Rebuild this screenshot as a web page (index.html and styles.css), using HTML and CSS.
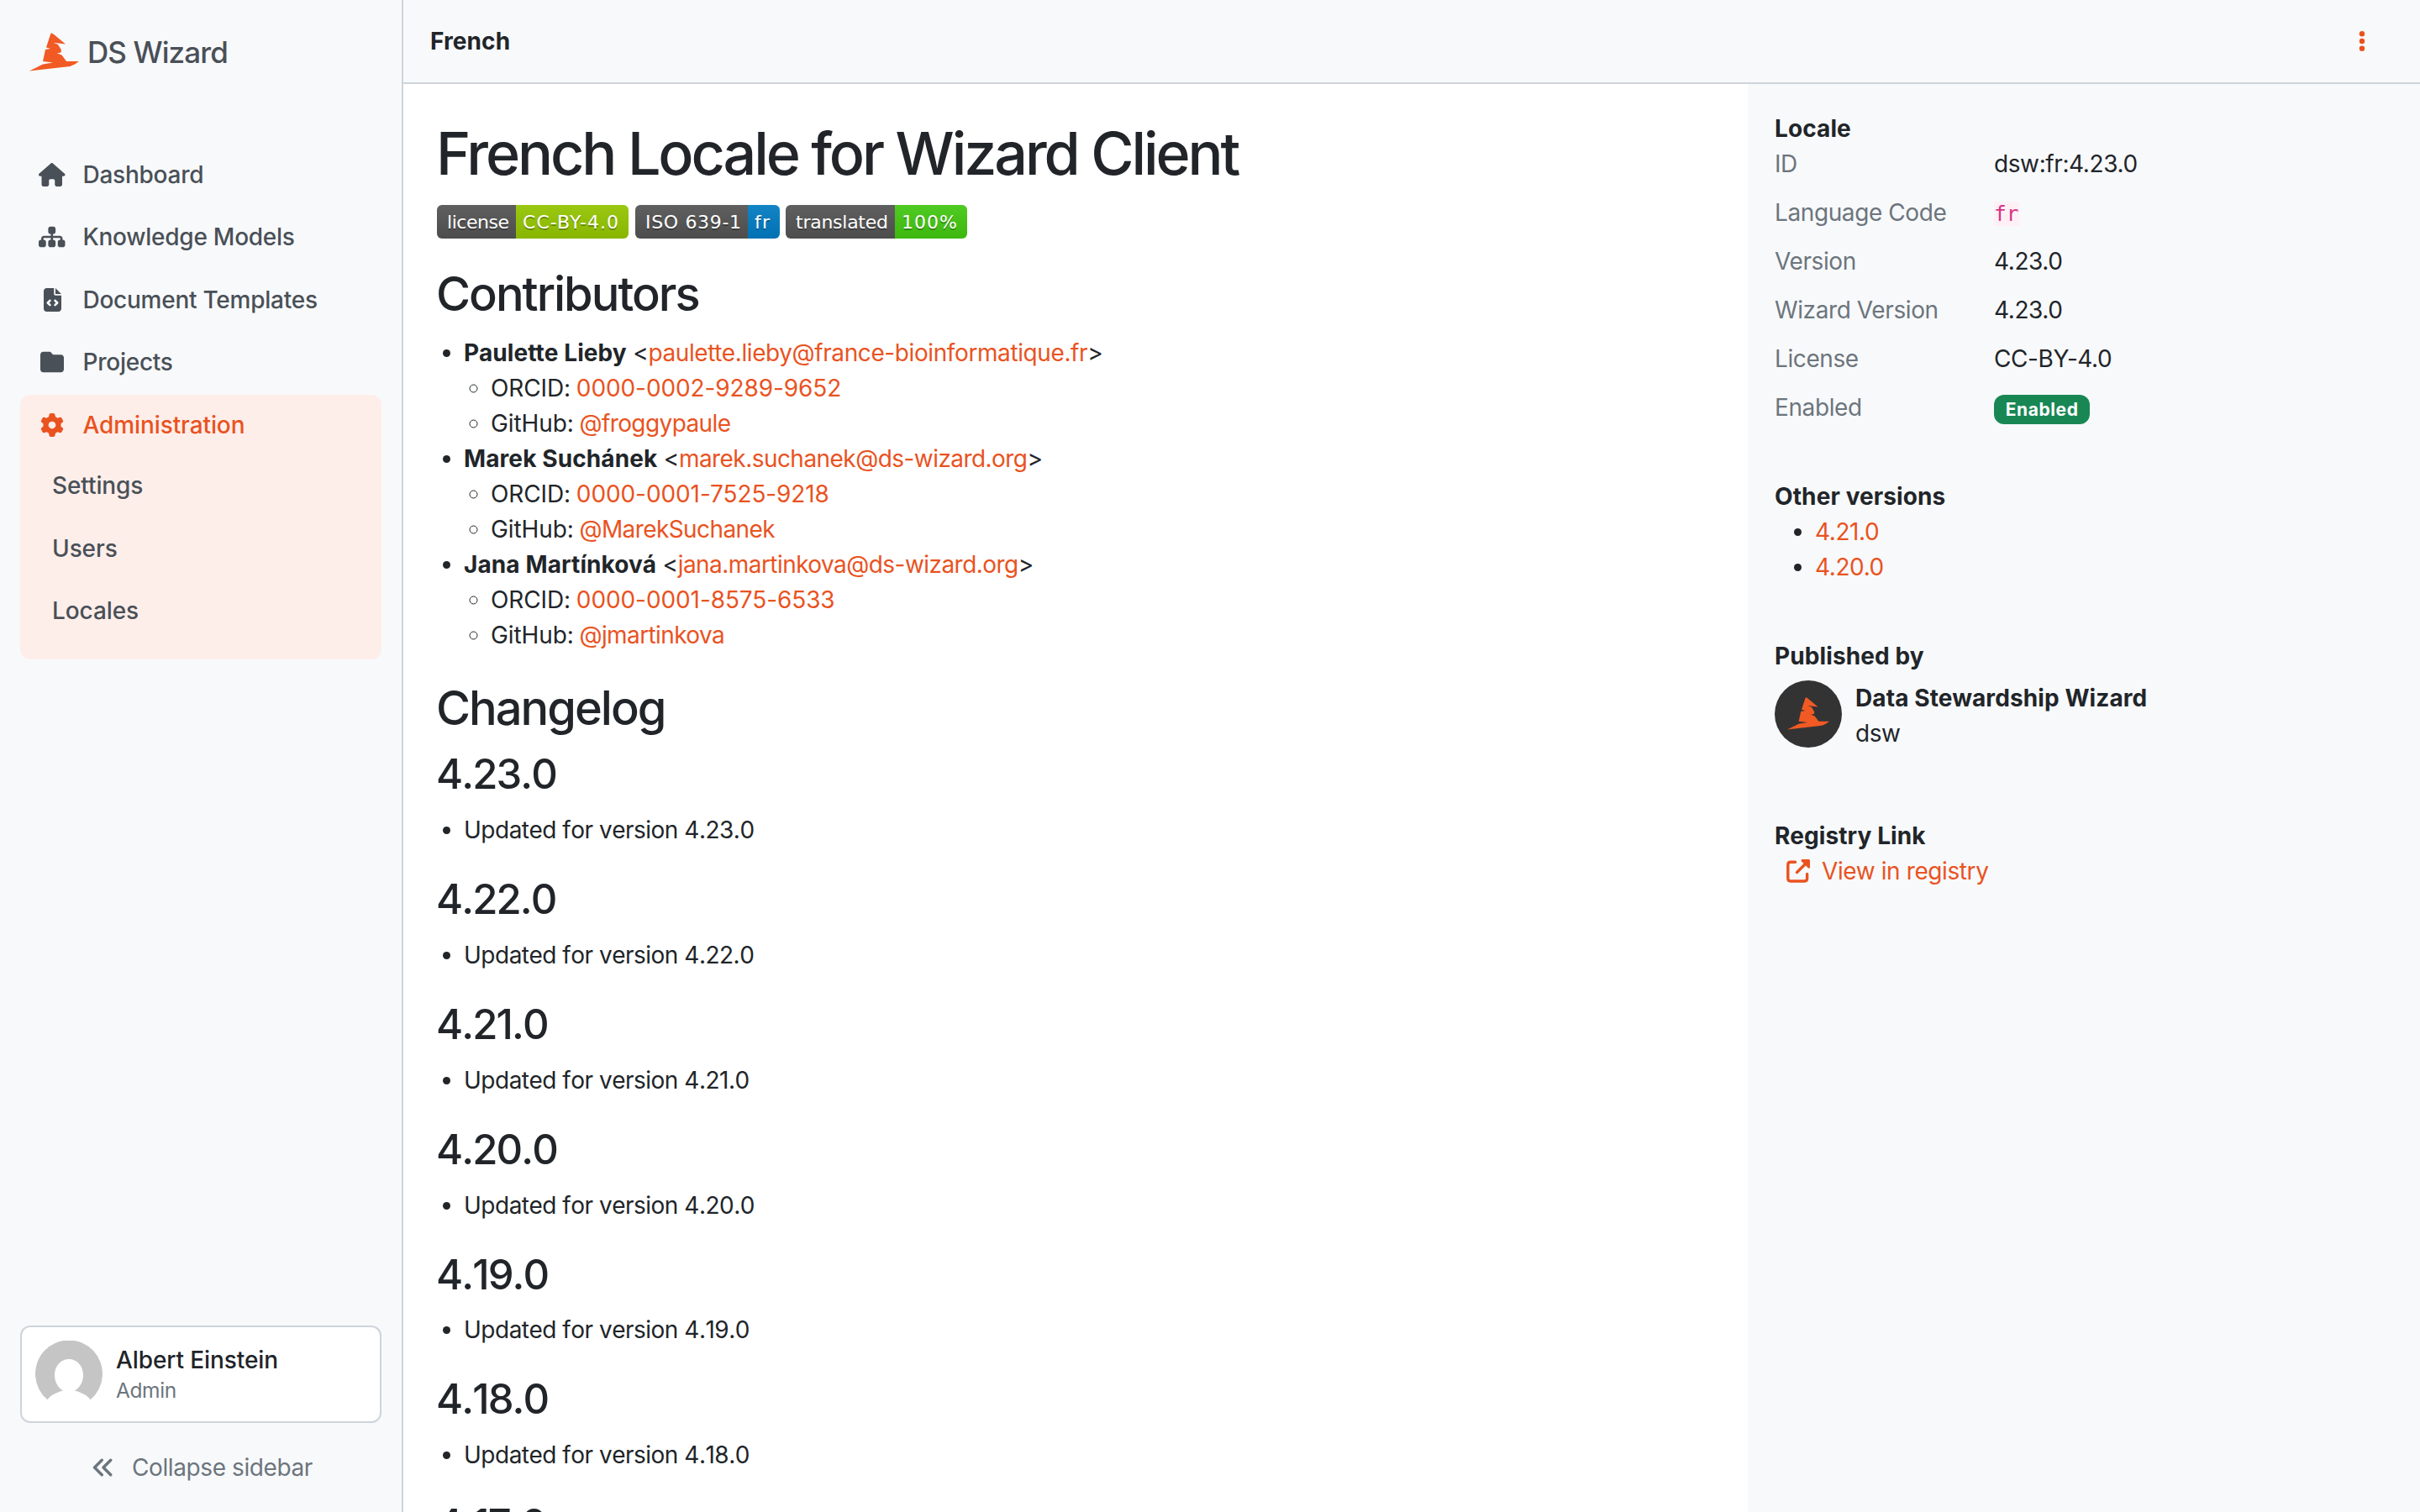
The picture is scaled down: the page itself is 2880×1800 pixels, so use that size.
FILE: index.html
```html
<!DOCTYPE html>
<html lang="en">
<head>
  <meta charset="UTF-8">
  <meta name="viewport" content="width=device-width, initial-scale=1.0">
  <title>French - DS Wizard</title>
  <link rel="stylesheet" href="styles.css">
</head>
<body>

<svg class="symbols" width="0" height="0">
  <symbol id="hat" viewBox="0 0 60 46">
    <path d="M25.500 0.500C26.500 0 28 1.200 29.500 2.300L43 13.500L28.500 11.800L34 14L38 20.500L37.500 23.500L33 24.500L38.500 26.500L44 34H59L54 37.500Q50 40 44 40.500L0 45.500L16 37.500L28 35.500L16 34L19 20L25 19L20 17.500Z"/>
  </symbol>
</svg>

<div class="page">
  <aside class="sidebar">
    <a class="logo" href="#">
      <svg class="logo-hat" viewBox="0 0 60 46"><use href="#hat"/></svg>
      <span>DS Wizard</span>
    </a>

    <nav class="menu">
      <a class="menu-item" href="#">
        <svg class="icon" viewBox="0 0 576 512"><path d="M575.8 255.5c0 18-15 32.1-32 32.1h-32l.7 160.2c0 2.7-.2 5.4-.5 8.100V472c0 22.100-17.900 40-40 40H456c-1.100 0-2.200 0-3.300-.1c-1.400 .1-2.800 .1-4.200 .1H416 392c-22.100 0-40-17.900-40-40V448 384c0-17.700-14.300-32-32-32H256c-17.700 0-32 14.300-32 32v64 24c0 22.100-17.900 40-40 40H160 128.100c-1.500 0-3-.1-4.500-.2c-1.200 .1-2.400 .2-3.600 .2H104c-22.100 0-40-17.900-40-40V360c0-.9 0-1.900 .1-2.800V287.600H32c-18 0-32-14-32-32.100c0-9 3-17 10-24L266.400 8c7-7 15-8 22-8s15 2 21 7L564.800 231.500c8 7 12 15 11 24z"/></svg>
        <span>Dashboard</span>
      </a>
      <a class="menu-item" href="#">
        <svg class="icon" viewBox="0 0 576 512"><path d="M208 80c0-26.500 21.500-48 48-48h64c26.500 0 48 21.500 48 48v64c0 26.500-21.500 48-48 48h-8v40H464c30.900 0 56 25.100 56 56v32h8c26.500 0 48 21.500 48 48v64c0 26.500-21.500 48-48 48H464c-26.500 0-48-21.500-48-48V368c0-26.500 21.500-48 48-48h8V288c0-4.400-3.600-8-8-8H312v40h8c26.500 0 48 21.500 48 48v64c0 26.500-21.500 48-48 48H256c-26.500 0-48-21.500-48-48V368c0-26.500 21.500-48 48-48h8V280H112c-4.400 0-8 3.600-8 8v32h8c26.500 0 48 21.500 48 48v64c0 26.500-21.500 48-48 48H48c-26.500 0-48-21.500-48-48V368c0-26.500 21.500-48 48-48h8V288c0-30.900 25.100-56 56-56H264V192h-8c-26.500 0-48-21.500-48-48V80z"/></svg>
        <span>Knowledge Models</span>
      </a>
      <a class="menu-item" href="#">
        <svg class="icon" viewBox="0 0 384 512"><path fill-rule="evenodd" d="M64 0C28.700 0 0 28.700 0 64V448c0 35.300 28.700 64 64 64H320c35.300 0 64-28.700 64-64V160H256c-17.700 0-32-14.300-32-32V0H64zM256 0V128H384L256 0zM153 289l-31 31 31 31c9.400 9.400 9.400 24.600 0 33.900s-24.600 9.400-33.900 0L71 337c-9.400-9.400-9.400-24.600 0-33.900l48-48c9.400-9.400 24.600-9.400 33.900 0s9.400 24.600 0 33.900zM265 255l48 48c9.400 9.400 9.400 24.600 0 33.900l-48 48c-9.400 9.400-24.600 9.400-33.900 0s-9.400-24.600 0-33.900l31-31-31-31c-9.400-9.400-9.400-24.600 0-33.900s24.600-9.400 33.900 0z"/></svg>
        <span>Document Templates</span>
      </a>
      <a class="menu-item" href="#">
        <svg class="icon" viewBox="0 0 512 512"><path d="M64 480H448c35.300 0 64-28.700 64-64V160c0-35.300-28.700-64-64-64H288c-10.100 0-19.600-4.700-25.600-12.800L243.200 57.600C231.100 41.500 212.100 32 192 32H64C28.700 32 0 60.700 0 96V416c0 35.300 28.700 64 64 64z"/></svg>
        <span>Projects</span>
      </a>
      <div class="menu-group">
        <a class="menu-item active" href="#">
          <svg class="icon" viewBox="0 0 512 512"><path d="M495.900 166.600c3.200 8.700 .5 18.400-6.400 24.600l-43.300 39.400c1.100 8.300 1.700 16.800 1.700 25.400s-.6 17.100-1.700 25.400l43.300 39.400c6.900 6.200 9.600 15.900 6.400 24.600c-4.400 11.900-9.700 23.300-15.800 34.300l-4.700 8.100c-6.600 11-14 21.400-22.100 31.200c-5.900 7.200-15.700 9.600-24.500 6.800l-55.700-17.700c-13.400 10.300-28.200 18.900-44 25.400l-12.500 57.100c-2 9.100-9 16.300-18.200 17.800c-13.800 2.300-28 3.500-42.500 3.500s-28.700-1.200-42.500-3.500c-9.200-1.500-16.200-8.700-18.200-17.800l-12.500-57.100c-15.800-6.500-30.600-15.100-44-25.400L83.100 425.900c-8.800 2.800-18.600 .3-24.500-6.800c-8.100-9.800-15.500-20.200-22.100-31.200l-4.700-8.100c-6.100-11-11.400-22.400-15.800-34.300c-3.200-8.700-.5-18.400 6.400-24.600l43.300-39.400C64.600 273.100 64 264.600 64 256s.6-17.100 1.700-25.400L22.400 191.200c-6.900-6.200-9.600-15.900-6.400-24.600c4.400-11.900 9.700-23.300 15.800-34.300l4.700-8.100c6.600-11 14-21.400 22.100-31.200c5.900-7.200 15.700-9.600 24.500-6.800l55.700 17.700c13.400-10.300 28.200-18.900 44-25.400l12.500-57.100c2-9.100 9-16.300 18.200-17.800C227.300 1.200 241.500 0 256 0s28.700 1.200 42.500 3.500c9.200 1.500 16.200 8.700 18.200 17.800l12.500 57.100c15.800 6.500 30.600 15.100 44 25.400l55.700-17.700c8.800-2.800 18.600-.3 24.500 6.800c8.100 9.800 15.500 20.200 22.100 31.200l4.700 8.100c6.100 11 11.400 22.400 15.800 34.300zM256 336a80 80 0 1 0 0-160 80 80 0 1 0 0 160z"/></svg>
          <span>Administration</span>
        </a>
        <a class="submenu-item" href="#">Settings</a>
        <a class="submenu-item" href="#">Users</a>
        <a class="submenu-item" href="#">Locales</a>
      </div>
    </nav>

    <div class="profile">
      <svg class="avatar" viewBox="0 0 80 80">
        <path fill="#c5c5c5" d="M14.500 70.300A40 40 0 1 1 65.500 70.300C62.500 65 54 61.500 47 59.500C53 56 57 49 57 41C57 30 49.500 22 40 22S23 30 23 41C23 49 27 56 33 59.500C26 61.500 17.500 65 14.500 70.300Z"/>
      </svg>
      <div>
        <div class="profile-name">Albert Einstein</div>
        <div class="profile-role">Admin</div>
      </div>
    </div>

    <a class="collapse" href="#">
      <svg class="icon" viewBox="0 0 512 512"><path d="M41.400 233.400c-12.500 12.500-12.500 32.800 0 45.300l160 160c12.500 12.500 32.800 12.500 45.300 0s12.500-32.800 0-45.300L109.300 256 246.600 118.600c12.500-12.500 12.500-32.800 0-45.300s-32.800-12.500-45.300 0l-160 160zm352-160l-160 160c-12.500 12.500-12.500 32.800 0 45.300l160 160c12.500 12.500 32.800 12.500 45.300 0s12.500-32.800 0-45.300L301.300 256 438.600 118.600c12.500-12.500 12.500-32.800 0-45.300s-32.800-12.500-45.300 0z"/></svg>
      <span>Collapse sidebar</span>
    </a>
  </aside>

  <div class="content">
    <header class="topbar">
      <strong>French</strong>
      <svg class="dots" viewBox="0 0 8 28"><circle cx="4" cy="5.250" r="3.200"/><circle cx="4" cy="14" r="3.200"/><circle cx="4" cy="22.750" r="3.200"/></svg>
    </header>

    <div class="detail">
      <main class="readme">
        <h1>French Locale for Wizard Client</h1>
        <div class="badges">
          <svg width="228" height="40" viewBox="0 0 114 20">
            <linearGradient id="shine" x2="0" y2="100%"><stop offset="0" stop-color="#bbb" stop-opacity=".1"/><stop offset="1" stop-opacity=".1"/></linearGradient>
            <clipPath id="c1"><rect width="114" height="20" rx="3"/></clipPath>
            <g clip-path="url(#c1)"><rect width="47" height="20" fill="#555"/><rect x="47" width="67" height="20" fill="#97ca00"/><rect width="114" height="20" fill="url(#shine)"/></g>
            <g class="shield-text">
              <text class="shade" x="6" y="15" textLength="37">license</text><text x="6" y="14" textLength="37">license</text>
              <text class="shade" x="51" y="15" textLength="57">CC-BY-4.0</text><text x="51" y="14" textLength="57">CC-BY-4.0</text>
            </g>
          </svg>
          <svg width="172" height="40" viewBox="0 0 86 20">
            <clipPath id="c2"><rect width="86" height="20" rx="3"/></clipPath>
            <g clip-path="url(#c2)"><rect width="67" height="20" fill="#555"/><rect x="67" width="19" height="20" fill="#007ec6"/><rect width="86" height="20" fill="url(#shine)"/></g>
            <g class="shield-text">
              <text class="shade" x="6" y="15" textLength="57">ISO 639-1</text><text x="6" y="14" textLength="57">ISO 639-1</text>
              <text class="shade" x="71" y="15" textLength="9">fr</text><text x="71" y="14" textLength="9">fr</text>
            </g>
          </svg>
          <svg width="216" height="40" viewBox="0 0 108 20">
            <clipPath id="c3"><rect width="108" height="20" rx="3"/></clipPath>
            <g clip-path="url(#c3)"><rect width="65" height="20" fill="#555"/><rect x="65" width="43" height="20" fill="#4c1"/><rect width="108" height="20" fill="url(#shine)"/></g>
            <g class="shield-text">
              <text class="shade" x="6" y="15" textLength="55">translated</text><text x="6" y="14" textLength="55">translated</text>
              <text class="shade" x="69" y="15" textLength="33">100%</text><text x="69" y="14" textLength="33">100%</text>
            </g>
          </svg>
        </div>

        <h2>Contributors</h2>
        <ul>
          <li><strong>Paulette Lieby</strong> &lt;<a href="#">paulette.lieby@france-bioinformatique.fr</a>&gt;
            <ul>
              <li>ORCID: <a class="orcid" href="#">0000-0002-9289-9652</a></li>
              <li>GitHub: <a href="#">@froggypaule</a></li>
            </ul>
          </li>
          <li><strong>Marek Suchánek</strong> &lt;<a class="email" href="#">marek.suchanek@ds-wizard.org</a>&gt;
            <ul>
              <li>ORCID: <a class="orcid" href="#">0000-0001-7525-9218</a></li>
              <li>GitHub: <a href="#">@MarekSuchanek</a></li>
            </ul>
          </li>
          <li><strong>Jana Martínková</strong> &lt;<a class="email" href="#">jana.martinkova@ds-wizard.org</a>&gt;
            <ul>
              <li>ORCID: <a class="orcid" href="#">0000-0001-8575-6533</a></li>
              <li>GitHub: <a href="#">@jmartinkova</a></li>
            </ul>
          </li>
        </ul>

        <h2>Changelog</h2>
        <h3>4.23.0</h3>
        <ul class="changes"><li>Updated for version 4.23.0</li></ul>
        <h3>4.22.0</h3>
        <ul class="changes"><li>Updated for version 4.22.0</li></ul>
        <h3>4.21.0</h3>
        <ul class="changes"><li>Updated for version 4.21.0</li></ul>
        <h3>4.20.0</h3>
        <ul class="changes"><li>Updated for version 4.20.0</li></ul>
        <h3>4.19.0</h3>
        <ul class="changes"><li>Updated for version 4.19.0</li></ul>
        <h3>4.18.0</h3>
        <ul class="changes"><li>Updated for version 4.18.0</li></ul>
        <h3>4.17.0</h3>
        <ul class="changes"><li>Updated for version 4.17.0</li></ul>
      </main>

      <aside class="info">
        <section>
          <strong>Locale</strong>
          <dl>
            <dt>ID</dt><dd>dsw:fr:4.23.0</dd>
            <dt>Language Code</dt><dd><code>fr</code></dd>
            <dt>Version</dt><dd>4.23.0</dd>
            <dt>Wizard Version</dt><dd>4.23.0</dd>
            <dt>License</dt><dd>CC-BY-4.0</dd>
            <dt>Enabled</dt><dd><span class="badge">Enabled</span></dd>
          </dl>
        </section>
        <section class="versions">
          <strong>Other versions</strong>
          <ul>
            <li><a href="#">4.21.0</a></li>
            <li><a href="#">4.20.0</a></li>
          </ul>
        </section>
        <section class="publisher">
          <strong>Published by</strong>
          <div class="organization">
            <div class="organization-logo"><svg viewBox="0 0 60 46"><use href="#hat"/></svg></div>
            <div>
              <strong>Data Stewardship Wizard</strong>
              <div>dsw</div>
            </div>
          </div>
        </section>
        <section>
          <strong>Registry Link</strong>
          <a class="registry-link" href="#">
            <svg viewBox="0 0 28 28"><path class="line" d="M10.500 3.200H5Q1.800 3.200 1.800 6.400V22.800Q1.800 26 5 26H21.400Q24.600 26 24.600 22.800V17.500M12.500 15.500L23 5"/><path d="M18 0H26.500Q28 0 28 1.500V10.500H26L17.500 2Z"/></svg>
            <span>View in registry</span>
          </a>
        </section>
      </aside>
    </div>
  </div>
</div>

</body>
</html>
```
FILE: styles.css
```css
* { box-sizing: border-box; }
body { margin: 0; font-family: Inter, sans-serif; font-size: 28px; line-height: 42px; letter-spacing: -0.4px; color: #212529; background-color: #fff; }
a { color: #e9531f; text-decoration: none; }
strong { font-weight: 700; letter-spacing: 0.1px; }
.symbols { display: none; }

.page { display: flex; height: 1800px; overflow: hidden; }

/* sidebar */
.sidebar { width: 480px; flex: none; display: flex; flex-direction: column; background-color: #f8f9fb; border-right: 2px solid #ced4da; padding: 0 24px; color: #495057; }
.logo { display: flex; align-items: center; gap: 9px; height: 124px; padding-left: 11px; color: #495057; font-size: 35px; font-weight: 500; letter-spacing: -0.9px; }
.logo-hat { width: 60px; height: 46px; fill: #f15a24; }
.menu { padding-top: 46.6px; letter-spacing: -0.25px; }
.menu-item { display: grid; grid-template-columns: 76px 1fr; align-items: center; height: 74.4px; color: #495057; font-weight: 500; }
.menu-item span { margin-left: -1.5px; }
.icon { height: 28px; fill: currentColor; justify-self: center; }
.menu-group { margin-top: 2px; padding-bottom: 21px; background-color: #feeeea; border-radius: 12px; letter-spacing: -0.1px; }
.menu-group .menu-item { height: 71px; }
.menu-item.active { color: #e9531f; }
.submenu-item { display: flex; align-items: center; height: 74.4px; padding-left: 38px; color: #495057; font-weight: 500; }
.profile { display: flex; gap: 16px; height: 116px; margin-top: auto; padding: 16px; background-color: #fff; border: 2px solid #ced4da; border-radius: 12px; }
.avatar { width: 80px; height: 80px; }
.profile-name { margin-top: 2px; color: #212529; font-weight: 500; letter-spacing: -0.1px; }
.profile-role { color: #6c757d; font-size: 24.5px; line-height: 31px; }
.collapse { display: flex; align-items: center; gap: 20px; height: 106px; padding-left: 85px; color: #6c757d; }

/* top bar */
.content { flex: 1; display: flex; flex-direction: column; }
.topbar { display: flex; align-items: center; justify-content: space-between; height: 100px; flex: none; padding: 0 65px 0 32px; background-color: #f8f9fb; border-bottom: 2px solid #ced4da; }
.dots { width: 8px; height: 28px; fill: #e9531f; }
.detail { flex: 1; display: flex; min-height: 0; }

/* readme */
.readme { width: 1600px; padding: 40px; overflow: hidden; }
.readme h1, .readme h2, .readme h3 { margin: 0 0 15px -1px; padding-top: 1px; font-weight: 500; line-height: 1.2; }
.readme h1 { font-size: 70px; letter-spacing: -3.1px; }
.readme h2 { font-size: 56px; letter-spacing: -2px; }
.readme h3 { font-size: 49px; letter-spacing: -1.9px; font-kerning: none; }
.readme ul { margin: 0 0 32px; padding-left: 32px; }
.readme ul ul { margin: 0; letter-spacing: -0.1px; word-spacing: -1px; }
.readme ul ul a { letter-spacing: -0.6px; }
.readme ul ul .orcid { letter-spacing: -0.1px; }
.readme .email { letter-spacing: -0.55px; }
.readme .changes { letter-spacing: -0.5px; font-kerning: none; }
.badges { display: flex; gap: 7.5px; padding-top: 4px; margin-bottom: 32px; letter-spacing: 0; }
.shield-text { font-family: Verdana, "DejaVu Sans", sans-serif; font-size: 11px; fill: #fff; }
.shield-text .shade { fill: #010101; fill-opacity: .3; }

/* info panel */
.info { flex: 1; padding: 32px; background-color: #f8f9fb; }
.info section { margin-bottom: 47.5px; }
.info dl { display: grid; grid-template-columns: 261px 1fr; row-gap: 16px; margin: 0; padding-bottom: 16px; }
.info dt { color: #6c757d; }
.info dd { margin: 0; height: 42px; }
.info code { color: #d63384; background-color: #fff0f6; font-family: "DejaVu Sans Mono", monospace; font-size: 24.5px; letter-spacing: 0; }
.info .badge { display: inline-block; padding: 7.35px 13.65px; vertical-align: 0; border-radius: 12px; background-color: #198754; color: #fff; font-size: 21px; font-weight: 700; line-height: 1; letter-spacing: 0.6px; }
.info ul { margin: 0; padding-left: 48px; }
.info .versions { margin-bottom: 64px; }
.info .publisher { margin-bottom: 80px; }
.organization { display: flex; gap: 16px; margin-top: 8px; }
.organization-logo { display: flex; align-items: center; justify-content: center; width: 80px; height: 80px; border-radius: 50%; background-color: #333; }
.organization-logo svg { width: 51px; height: 39px; fill: #f15a24; }
.registry-link { display: flex; align-items: center; gap: 14px; padding-left: 14px; }
.registry-link svg { width: 28px; height: 28px; fill: currentColor; }
.registry-link .line { fill: none; stroke: currentColor; stroke-width: 3.4; stroke-linecap: round; }
```
